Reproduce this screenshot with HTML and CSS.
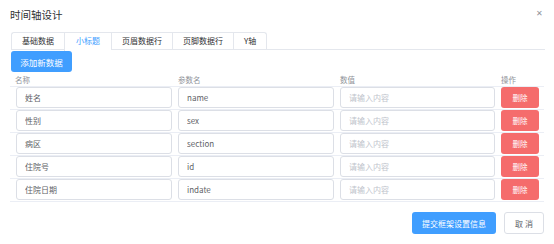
FILE: index.html
```html
<!DOCTYPE html>
<html lang="zh-CN">
<head>
  <meta charset="UTF-8">
  <title>时间轴设计</title>
  <link rel="stylesheet" href="styles.css">
</head>
<body>
  <div class="dialog">
    <div class="dialog-header">
      <span class="dialog-title">时间轴设计</span>
      <span class="dialog-close">&#x2715;</span>
    </div>

    <div class="tabs">
      <div class="tab">基础数据</div>
      <div class="tab tab-active">小标题</div>
      <div class="tab">页眉数据行</div>
      <div class="tab">页脚数据行</div>
      <div class="tab">Y轴</div>
    </div>

    <button class="btn btn-primary btn-add">添加新数据</button>

    <div class="table">
      <div class="table-row table-head">
        <div class="cell">名称</div>
        <div class="cell">参数名</div>
        <div class="cell">数值</div>
        <div class="cell">操作</div>
      </div>
      <div class="table-row">
        <div class="cell"><input class="input" value="姓名"></div>
        <div class="cell"><input class="input" value="name"></div>
        <div class="cell"><input class="input" placeholder="请输入内容"></div>
        <div class="cell"><button class="btn btn-danger">删除</button></div>
      </div>
      <div class="table-row">
        <div class="cell"><input class="input" value="性别"></div>
        <div class="cell"><input class="input" value="sex"></div>
        <div class="cell"><input class="input" placeholder="请输入内容"></div>
        <div class="cell"><button class="btn btn-danger">删除</button></div>
      </div>
      <div class="table-row">
        <div class="cell"><input class="input" value="病区"></div>
        <div class="cell"><input class="input" value="section"></div>
        <div class="cell"><input class="input" placeholder="请输入内容"></div>
        <div class="cell"><button class="btn btn-danger">删除</button></div>
      </div>
      <div class="table-row">
        <div class="cell"><input class="input" value="住院号"></div>
        <div class="cell"><input class="input" value="id"></div>
        <div class="cell"><input class="input" placeholder="请输入内容"></div>
        <div class="cell"><button class="btn btn-danger">删除</button></div>
      </div>
      <div class="table-row">
        <div class="cell"><input class="input" value="住院日期"></div>
        <div class="cell"><input class="input" value="indate"></div>
        <div class="cell"><input class="input" placeholder="请输入内容"></div>
        <div class="cell"><button class="btn btn-danger">删除</button></div>
      </div>
    </div>

    <div class="dialog-footer">
      <button class="btn btn-primary btn-submit">提交框架设置信息</button>
      <button class="btn btn-default btn-cancel">取 消</button>
    </div>
  </div>
</body>
</html>
```

FILE: styles.css
```css
* {
  box-sizing: border-box;
}

body {
  margin: 0;
  background-color: #fff;
  font-family: 'Noto Sans CJK SC', 'Noto Sans', sans-serif;
  font-size: 8px;
  color: #606266;
}

.dialog {
  width: 554px;
  height: 244px;
  padding: 0 10px;
}

.dialog-header {
  display: flex;
  justify-content: space-between;
  align-items: center;
  height: 32px;
  padding-bottom: 4px;
}

.dialog-title {
  font-size: 10.5px;
  color: #303133;
}

.dialog-close {
  font-size: 8px;
  color: #909399;
  margin-right: 1px;
  margin-top: -4px;
}

.tabs {
  display: flex;
  margin-left: 1px;
  margin-right: -1px;
  border-bottom: 1px solid #e4e7ed;
  height: 18px;
}

.tab {
  height: 18px;
  line-height: 16px;
  padding: 0 10px;
  font-size: 8px;
  color: #303133;
  border: 1px solid #e4e7ed;
  border-right: none;
  border-bottom: none;
}

.tab:first-child {
  border-top-left-radius: 3px;
}

.tab:last-child {
  border-right: 1px solid #e4e7ed;
  border-top-right-radius: 3px;
}

.tab-active {
  color: #409eff;
  background-color: #fff;
  height: 19px;
  padding: 0 11px;
}

.btn {
  font-family: inherit;
  border: 1px solid transparent;
  border-radius: 3px;
  cursor: pointer;
  padding: 0;
}

.btn-primary {
  background-color: #409eff;
  color: #fff;
}

.btn-danger {
  display: block;
  background-color: #f56c6c;
  color: #fff;
  width: 38px;
  height: 21px;
  font-size: 7.5px;
}

.btn-default {
  background-color: #fff;
  border-color: #dcdfe6;
  color: #606266;
}

.btn-add {
  display: block;
  margin: 1px 0 0 1px;
  width: 61px;
  height: 21px;
  font-size: 8.5px;
}

.table {
  margin-top: 1px;
}

.table-row {
  display: grid;
  grid-template-columns: 156px 156px 155px 38px;
  column-gap: 6px;
  padding: 0 0 1px 6px;
  border-bottom: 1px solid #ebeef5;
  height: 23px;
}

.table-head {
  height: 14px;
  padding-bottom: 0;
  font-size: 7.5px;
  color: #909399;
  align-items: center;
}

.table-head .cell:first-child {
  margin-left: -1px;
}

.input {
  display: block;
  width: 100%;
  height: 21px;
  border: 1px solid #dcdfe6;
  border-radius: 3px;
  padding: 0 8px;
  font-family: inherit;
  font-size: 8px;
  color: #606266;
  outline: none;
}

.input::placeholder {
  color: #c0c4cc;
}

.dialog-footer {
  display: flex;
  justify-content: flex-end;
  gap: 8px;
  margin-top: 10px;
}

.btn-submit {
  width: 84px;
  height: 22px;
  font-size: 8px;
}

.btn-cancel {
  width: 40px;
  height: 22px;
  font-size: 8px;
}
```
